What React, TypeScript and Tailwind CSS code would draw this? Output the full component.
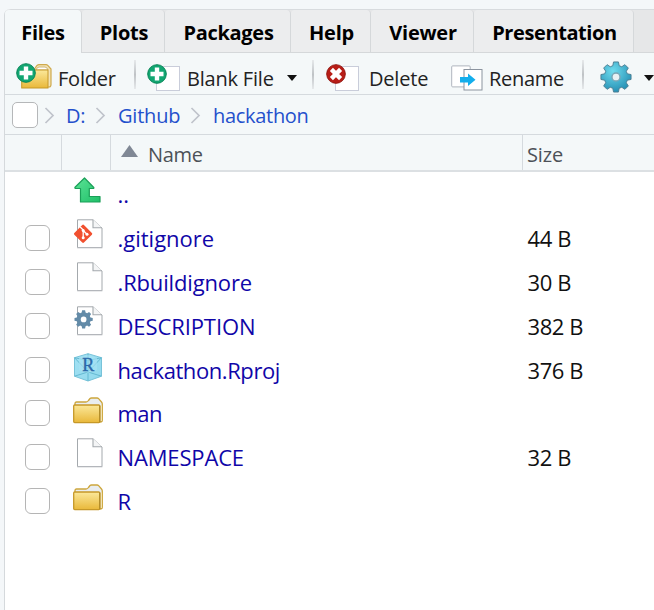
import type { ReactNode } from "react";

const GEAR =
  "M13.4 1h5.2l.8 4 2.7 1.1L25.500 3.900l3.600 3.600-2.200 3.400L28 13.600l4 .8v5.200l-4 .8-1.100 2.700 2.200 3.400-3.600 3.600-3.400-2.200-2.700 1.100-.8 4h-5.200l-.8-4-2.700-1.100-3.400 2.200-3.600-3.600 2.200-3.400L4 20.400l-4-.8v-5.200l4-.8 1.100-2.700-2.200-3.400 3.600-3.600 3.400 2.200L12.600 5z";

function Defs() {
  return (
    <svg className="absolute h-0 w-0" aria-hidden="true">
      <defs>
        <linearGradient id="gold" x1="0" y1="0" x2="0" y2="1">
          <stop offset="0" stopColor="#fbe89a" />
          <stop offset="1" stopColor="#e9b83a" />
        </linearGradient>
        <linearGradient id="green" x1="0" y1="0" x2="1" y2="1">
          <stop offset="0" stopColor="#5be396" />
          <stop offset="1" stopColor="#1fbf68" />
        </linearGradient>
        <radialGradient id="teal" cx=".4" cy=".3" r=".7">
          <stop offset="0" stopColor="#6fdcee" />
          <stop offset="1" stopColor="#2791b5" />
        </radialGradient>
        <linearGradient id="ice" x1="0" y1="0" x2="1" y2="1">
          <stop offset="0" stopColor="#a4e2f4" />
          <stop offset="1" stopColor="#8fd8ec" />
        </linearGradient>
      </defs>
    </svg>
  );
}

function FolderIcon() {
  return (
    <svg width="31" height="27" viewBox="0 0 31 27" className="mt-[3px]">
      <path d="M2 9V6.500Q2 5 3.500 5H13q1.500 0 2.500-1.500L17 1.500Q17.500 1 18.500 1H24q1 0 1.600.7L28.500 5q.8 1 .8 2v16q0 2-2 2H24z" fill="#e9edf0" stroke="#cda63c" strokeWidth="1.300" />
      <path d="M26.800 8.500h2v15.500h-2z" fill="#f6e6b4" />
      <rect x=".7" y="8" width="26" height="17.600" rx="1" fill="url(#gold)" stroke="#c69828" strokeWidth="1.300" />
      <path d="M26.900 8.500v16.500" stroke="#a9852a" strokeWidth="1" />
    </svg>
  );
}

function FileIcon({ children }: { children?: ReactNode }) {
  return (
    <svg width="32" height="30" viewBox="0 0 32 30" className="overflow-visible">
      <path d="M4.500 .8h15.500l9 8.200V28.500H4.500z" fill="#fff" stroke="#a4a9ad" strokeWidth="1" />
      <path d="M20 .8v7.900h9" fill="#f4f5f6" stroke="#a4a9ad" strokeWidth="1.100" />
      <path d="M4.200 28.800h25.200" stroke="#b9bdc0" strokeWidth="1" />
      {children}
    </svg>
  );
}

function GitIcon() {
  return (
    <FileIcon>
      <rect x="3.300" y="8" width="13.600" height="13.600" rx="1.200" transform="rotate(45 10.100 14.800)" fill="#f1502f" />
      <path d="M7.200 8l3 3v8M10.200 11.500l4 4" stroke="#fff" strokeWidth="1.300" fill="none" />
      <circle cx="10.200" cy="11.500" r="1.500" fill="#fff" />
      <circle cx="10.200" cy="18.800" r="1.500" fill="#fff" />
      <circle cx="14" cy="15.200" r="1.500" fill="#fff" />
    </FileIcon>
  );
}

function ConfigIcon() {
  return (
    <FileIcon>
      <g transform="translate(1.500 3.700) scale(.57)">
        <path d={GEAR} fill="#638ba8" />
        <circle cx="16" cy="17" r="5" fill="#fff" />
      </g>
    </FileIcon>
  );
}

function ProjectIcon() {
  return (
    <svg width="30" height="29" viewBox="0 0 30 29" className="mt-[4px]">
      <path d="M15 .7l13.500 4v18.500L15 28 1.500 23.200V4.700z" fill="url(#ice)" stroke="#78c3d9" />
      <path d="M1.500 4.700L15 7.500l13.500-2.800M15 7.500V28M1.500 23.200L15 19l13.500 4.200M15 .7V19M1.500 4.700L15 19 28.500 4.700" fill="none" stroke="#5fb6ce" strokeWidth=".9" />
      <path d="M6 5l9-3 9 3v12l-9 3-9-3z" fill="#a8e3f3" opacity=".6" />
      <text x="15.200" y="18" textAnchor="middle" fontSize="18" fontFamily="Liberation Serif, serif" fill="#2c69a9" stroke="#2c69a9" strokeWidth=".4">R</text>
    </svg>
  );
}

function UpIcon() {
  return (
    <svg width="28" height="27" viewBox="0 0 28 27" className="ml-px mt-[2px]">
      <path d="M10.500 1l9.300 9.500q.3 1-.5 1h-4v8H26v5.500H6.500V11.500H1.500q-1-.3-.5-1.200z" fill="url(#green)" stroke="#1b9f58" strokeWidth="1.200" strokeLinejoin="round" />
    </svg>
  );
}

function Badge({ kind }: { kind: "add" | "remove" }) {
  return (
    <svg width="20" height="20" viewBox="0 0 20 20" className="absolute left-0 top-0">
      <circle cx="10" cy="10" r="9.300" fill={kind === "add" ? "#12a672" : "#b81d17"} stroke={kind === "add" ? "#078657" : "#951812"} />
      <path
        d="M10 3.500v13M3.500 10h13"
        stroke="#fff"
        strokeWidth="4.400"
        transform={kind === "remove" ? "rotate(45 10 10)" : undefined}
      />
    </svg>
  );
}

function NewFolder() {
  return (
    <span className="relative mt-px h-[26px] w-[36px] shrink-0">
      <svg width="32" height="26" viewBox="0 0 32 26" className="absolute left-[5px] top-0">
        <path d="M12 8l4-5.500Q17 1.600 18 1.600h7q1 0 2 1L30 6v15.500Q30 24 28 24H12z" fill="#f3e3b5" stroke="#cfaa4d" strokeWidth="1.200" />
        <path d="M15 7q1-3 3-3h6q2 0 3 3z" fill="#fff" stroke="#cdb679" />
        <rect x=".7" y="7" width="26.300" height="18" fill="url(#gold)" stroke="#c69828" />
      </svg>
      <Badge kind="add" />
    </span>
  );
}

function BlankDoc({ kind }: { kind: "add" | "remove" }) {
  return (
    <span className="relative mt-[3px] h-[27px] w-[33px] shrink-0">
      <span className="absolute left-[9px] top-[2px] h-[25px] w-[24px] border border-[#c9cdda] bg-white" />
      <Badge kind={kind} />
    </span>
  );
}

function RenameIcon() {
  return (
    <svg width="32" height="26" viewBox="0 0 32 26" className="mt-[4px] shrink-0">
      <rect x=".7" y=".9" width="18.500" height="21" rx="1" fill="#fff" stroke="#afb5be" />
      <rect x="13" y="4.500" width="18" height="20.500" fill="#fff" stroke="#8b949f" />
      <path d="M9 12h8V8.500l7.500 6.300-7.500 6.200v-3.500H9z" fill="#13aeec" />
    </svg>
  );
}

function Chevron() {
  return (
    <svg width="11" height="17" viewBox="0 0 11 17" className="shrink-0">
      <path d="M1.500 1l7.500 7.500L1.500 16" fill="none" stroke="#bfc3cb" strokeWidth="1.700" />
    </svg>
  );
}

function Caret() {
  return (
    <svg width="10" height="6" viewBox="0 0 10 6" className="mt-[5px] shrink-0">
      <path d="M0 0h10L5 6z" fill="#111" />
    </svg>
  );
}

function Divider() {
  return <span className="mb-[3px] h-[29px] w-[2px] shrink-0 bg-linear-to-b from-[#e6e9eb] via-[#bfc3c6] to-[#e6e9eb]" />;
}

const tabs = [
  { label: "Files", cls: "w-[77px] tracking-[-0.300px]" },
  { label: "Plots", cls: "w-[83px] tracking-[-0.200px]" },
  { label: "Packages", cls: "w-[126px] tracking-[-0.300px]" },
  { label: "Help", cls: "w-[80px] tracking-[-0.200px]" },
  { label: "Viewer", cls: "w-[103px] tracking-[-0.250px]" },
  { label: "Presentation", cls: "w-[160px] tracking-[-0.400px]" },
];

const rows = [
  { name: "..", icon: <UpIcon />, size: "", cls: "" },
  { name: ".gitignore", icon: <GitIcon />, size: "44 B", cls: "" },
  { name: ".Rbuildignore", icon: <FileIcon />, size: "30 B", cls: "tracking-[-0.150px]" },
  { name: "DESCRIPTION", icon: <ConfigIcon />, size: "382 B", cls: "tracking-[-0.100px]" },
  { name: "hackathon.Rproj", icon: <ProjectIcon />, size: "376 B", cls: "tracking-[-0.420px]" },
  { name: "man", icon: <FolderIcon />, size: "", cls: "tracking-[-0.600px]" },
  { name: "NAMESPACE", icon: <FileIcon />, size: "32 B", cls: "tracking-[-0.150px]" },
  { name: "R", icon: <FolderIcon />, size: "", cls: "" },
];

export default function App() {
  return (
    <div className="h-[610px] w-[654px] overflow-hidden bg-[#f4f7f9] pl-1 pt-[9px] font-['Open_Sans','Noto_Sans',sans-serif] leading-none whitespace-nowrap">
      <Defs />
      <div className="flex h-[601px] flex-col rounded-tl-md border-l border-[#d5d9dc] bg-white">
        <div className="flex h-[44px] shrink-0 rounded-tl-md border-t border-[#d8dbde] bg-[#e6e7e8]">
          {tabs.map((t, i) => (
            <div
              key={t.label}
              className={`flex shrink-0 items-center justify-center rounded-t-[4px] border-r border-[#d5d8da] pt-[3px] text-[20px] font-bold text-black ${t.cls} ${i === 0 ? "bg-[#f4f8f9]" : "border-b bg-[#ecedee] pl-[2px]"}`}
            >
              {t.label}
            </div>
          ))}
          <div className="flex-1 border-b border-[#d5d8da]" />
        </div>

        <div className="flex h-[42px] shrink-0 items-center border-b border-[#d5dade] bg-[#f4f8f9] pl-[11px] pt-[4px] text-[20px] text-[#222]">
          <NewFolder />
          <span className="ml-[6px] w-[77px] pt-[7px] tracking-[-0.200px]">Folder</span>
          <Divider />
          <span className="w-[11px] shrink-0" />
          <BlankDoc kind="add" />
          <span className="ml-[7px] w-[100px] shrink-0 pt-[7px] tracking-[-0.200px]">Blank File</span>
          <Caret />
          <span className="w-[15px] shrink-0" />
          <Divider />
          <span className="w-[12px] shrink-0" />
          <BlankDoc kind="remove" />
          <span className="ml-[10px] w-[82px] shrink-0 pt-[7px] tracking-[-0.200px]">Delete</span>
          <RenameIcon />
          <span className="ml-[6px] w-[93px] shrink-0 pt-[7px] tracking-[-0.300px]">Rename</span>
          <Divider />
          <svg width="32" height="32" viewBox="-1 0 34 34" className="ml-[16px] mt-[2px] shrink-0">
            <path d={GEAR} fill="url(#teal)" stroke="#4c7e92" strokeLinejoin="round" />
            <circle cx="16" cy="17" r="4.300" fill="#e8f1f4" stroke="#77a5b5" strokeWidth="1.500" />
          </svg>
          <span className="w-[12px] shrink-0" />
          <Caret />
        </div>

        <div className="flex h-[40px] shrink-0 items-center border-b border-[#d5dade] bg-[#f4f8f9] pl-[7px] pt-px text-[20px] text-[#2450cc]">
          <span className="mr-[6px] h-[26px] w-[26px] shrink-0 rounded-[5px] border border-[#b5b7b9] bg-white" />
          <Chevron />
          <span className="ml-[11px] w-[29px] pt-px tracking-[-0.300px]">D:</span>
          <Chevron />
          <span className="ml-[12px] w-[72px] pt-px tracking-[-0.200px]">Github</span>
          <Chevron />
          <span className="ml-[12px] pt-px tracking-[-0.300px]">hackathon</span>
        </div>

        <div className="flex h-[37px] shrink-0 border-b-2 border-[#dce0e3] bg-[#f4f8f9] text-[20px] text-[#4c5157]">
          <div className="w-[57px] border-r border-[#d5dade]" />
          <div className="w-[49px] border-r border-[#d5dade]" />
          <div className="flex w-[412px] items-center border-r border-[#d5dade] pl-[10px]">
            <svg width="17" height="12" viewBox="0 0 17 12" className="mb-[4px] mr-[10px]">
              <path d="M8.500 0L17 12H0z" fill="#808895" />
            </svg>
            <span className="pt-[5px] tracking-[-0.300px]">Name</span>
          </div>
          <div className="flex items-center pl-[4px] pt-[5px] tracking-[-0.150px]">Size</div>
        </div>

        {rows.map((r) => (
          <div key={r.name} className="flex h-[43.800px] shrink-0 items-center text-[22px]">
            <div className="flex w-[68px] shrink-0 pl-[20px] pt-px">
              {r.name !== ".." ? (
                <span className="h-[26px] w-[25px] rounded-[6px] border border-[#b5b5b5] bg-white" />
              ) : null}
            </div>
            <div className="flex w-[44.500px] shrink-0 pb-[8px]">{r.icon}</div>
            <div className={`w-[410px] shrink-0 pt-px text-[#1006a8] ${r.cls}`}>{r.name}</div>
            <div className="pt-px tracking-[-0.400px] text-[#111]">{r.size}</div>
          </div>
        ))}
      </div>
    </div>
  );
}
